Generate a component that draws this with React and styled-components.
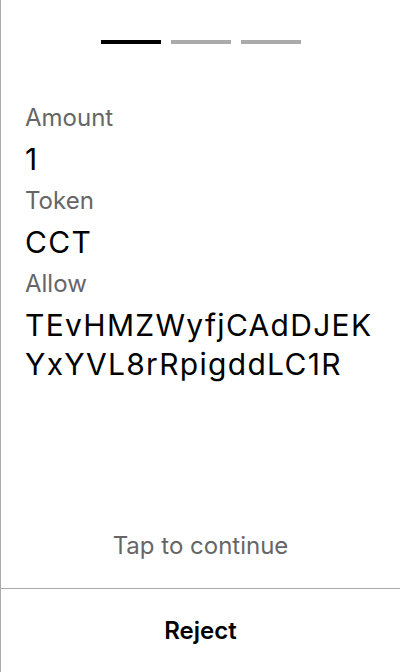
import React from "react";
import styled, { createGlobalStyle } from "styled-components";

const Global = createGlobalStyle`
  html, body { margin: 0; padding: 0; background: #fff; }
  body { font-family: Inter, "Noto Sans", sans-serif; }
  * { box-sizing: border-box; }
`;

const Screen = styled.div`
  display: flex;
  flex-direction: column;
  height: 672px;
  border-left: 1px solid #aaaaaa;
  background: #fff;
`;

const Steps = styled.div`
  display: flex;
  justify-content: center;
  gap: 10px;
  padding-top: 40px;
`;

const Step = styled.div`
  width: 60px;
  height: 4px;
  background: ${(p) => (p.$active ? "#000000" : "#aaaaaa")};
`;

const Details = styled.div`
  display: flex;
  flex-direction: column;
  padding: 52px 24px 0 24px;
`;

const Label = styled.div`
  font-size: 24px;
  line-height: 44px;
  color: #666666;
`;

const Value = styled.div`
  font-size: 30px;
  line-height: 39px;
  letter-spacing: 1.3px;
  color: #000000;
  word-break: break-all;
`;

const Spacer = styled.div`
  flex: 1;
`;

const Hint = styled.div`
  text-align: center;
  font-size: 24px;
  line-height: 28px;
  color: #666666;
  padding-bottom: 28px;
`;

const RejectButton = styled.button`
  height: 84px;
  border: none;
  border-top: 1px solid #aaaaaa;
  background: #fff;
  font-family: Inter, "Noto Sans", sans-serif;
  font-size: 24px;
  font-weight: 600;
  color: #000;
  padding: 0;
  cursor: pointer;
`;

const fields = [
  { label: "Amount", value: "1" },
  { label: "Token", value: "CCT" },
  { label: "Allow", value: "TEvHMZWyfjCAdDJEKYxYVL8rRpigddLC1R" },
];

export default function App() {
  return (
    <>
      <Global />
      <Screen>
        <Steps>
          <Step $active />
          <Step />
          <Step />
        </Steps>
        <Details>
          {fields.map((f) => (
            <React.Fragment key={f.label}>
              <Label>{f.label}</Label>
              <Value>{f.value}</Value>
            </React.Fragment>
          ))}
        </Details>
        <Spacer />
        <Hint>Tap to continue</Hint>
        <RejectButton>Reject</RejectButton>
      </Screen>
    </>
  );
}
